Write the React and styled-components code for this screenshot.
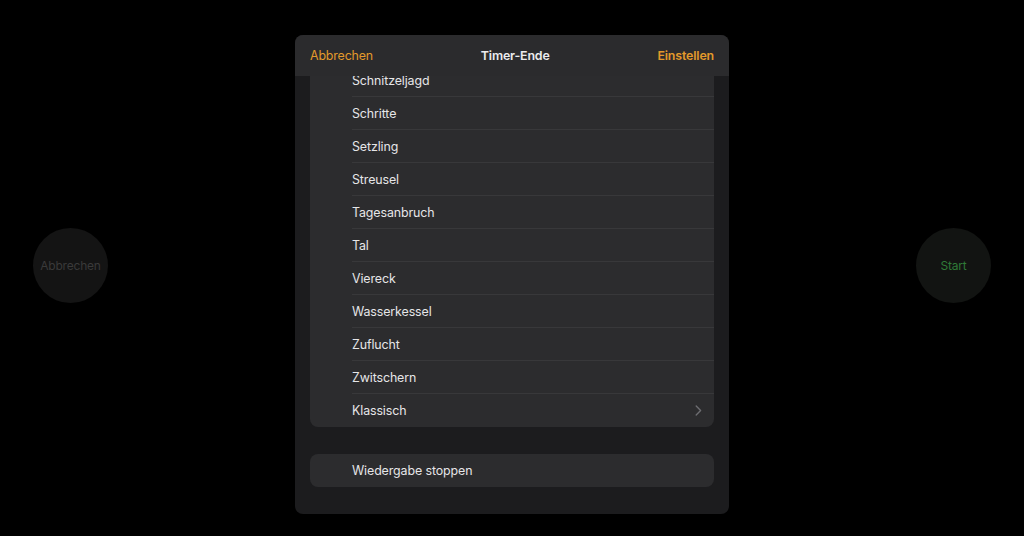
import React from 'react';
import styled, { createGlobalStyle } from 'styled-components';

const Global = createGlobalStyle`
  html, body {
    margin: 0;
    padding: 0;
    background: #000;
  }
  body {
    font-family: Inter, "Liberation Sans", sans-serif;
    -webkit-font-smoothing: antialiased;
  }
`

const Screen = styled.div`
  width: 1024px;
  height: 536px;
  background: #000;
  display: flex;
  align-items: flex-start;
  justify-content: space-between;
  padding: 0 33px;
  box-sizing: border-box;
  overflow: hidden;
`

const RoundButton = styled.div`
  width: 75px;
  height: 75px;
  margin-top: 228px;
  border-radius: 50%;
  background: ${p => p.green ? '#121412' : '#141414'};
  color: ${p => p.green ? '#2f7a37' : '#3a3a3a'};
  font-size: 12px;
  display: flex;
  align-items: center;
  justify-content: center;
  letter-spacing: -0.2px;
`

const Sheet = styled.div`
  width: 434px;
  height: 479px;
  margin-top: 35px;
  background: #1c1c1e;
  border-radius: 8px;
  overflow: hidden;
  display: flex;
  flex-direction: column;
`

const Header = styled.div`
  height: 41px;
  flex-shrink: 0;
  background: #2b2b2d;
  display: flex;
  align-items: center;
  justify-content: space-between;
  padding: 0 15px;
  font-size: 12.4px;
`

const HeaderButton = styled.span`
  color: #e39a2b;
  font-weight: ${p => p.strong ? 600 : 400};
  letter-spacing: -0.15px;
`

const Title = styled.span`
  color: #ececee;
  font-weight: 600;
  letter-spacing: -0.15px;
`

const Scroll = styled.div`
  flex: 1;
  overflow: hidden;
  padding: 0 15px;
`

const Group = styled.div`
  background: #2c2c2e;
  border-radius: 8px;
  margin-top: ${p => p.top}px;
  overflow: hidden;
`

const Row = styled.div`
  height: 33px;
  display: flex;
  align-items: center;
  margin-left: 42px;
  padding-right: 12px;
  font-size: 12.4px;
  color: #e6e6e8;
  letter-spacing: -0.1px;
  border-bottom: ${p => p.last ? 'none' : '1px solid #38383a'};
  box-sizing: border-box;
  justify-content: space-between;
`

const Chevron = () => (
  <svg width="7" height="11" viewBox="0 0 7 11">
    <path d="M1.2 1 L5.6 5.5 L1.2 10" fill="none" stroke="#6c6c70" strokeWidth="1.4" strokeLinecap="round" strokeLinejoin="round" />
  </svg>
)

const tones = [
  'Schnitzeljagd', 'Schritte', 'Setzling', 'Streusel', 'Tagesanbruch',
  'Tal', 'Viereck', 'Wasserkessel', 'Zuflucht', 'Zwitschern'
];

export default function App() {
  return (
    <Screen>
      <Global />
      <RoundButton>Abbrechen</RoundButton>
      <Sheet>
        <Header>
          <HeaderButton>Abbrechen</HeaderButton>
          <Title>Timer-Ende</Title>
          <HeaderButton strong>Einstellen</HeaderButton>
        </Header>
        <Scroll>
          <Group top={-12}>
            {tones.map(t => <Row key={t}>{t}</Row>)}
            <Row last>Klassisch<Chevron /></Row>
          </Group>
          <Group top={27}>
            <Row last>Wiedergabe stoppen</Row>
          </Group>
        </Scroll>
      </Sheet>
      <RoundButton green>Start</RoundButton>
    </Screen>
  );
}
